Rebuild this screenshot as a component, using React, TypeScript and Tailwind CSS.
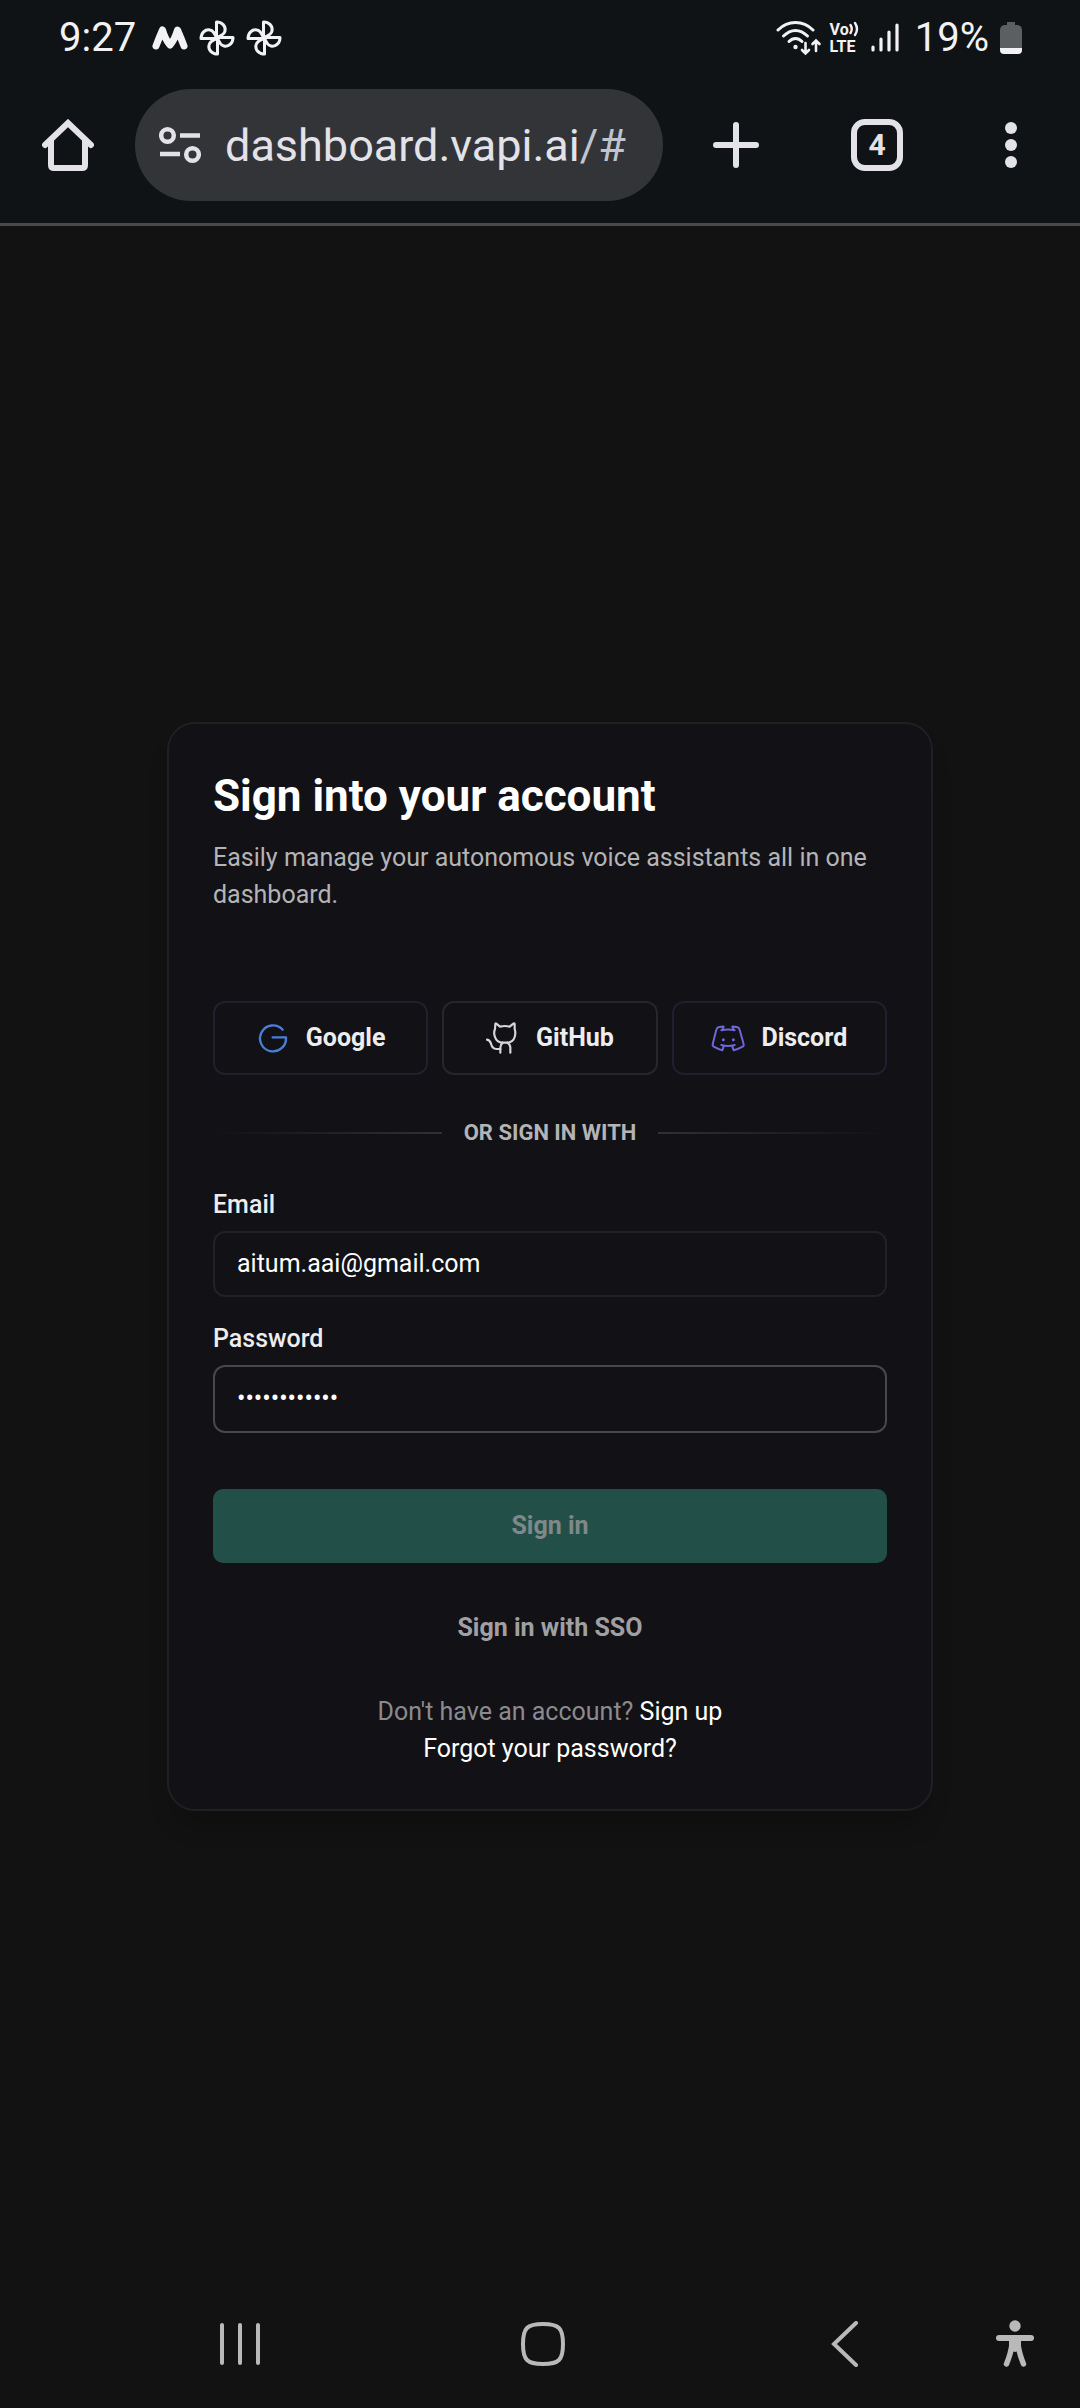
import React from "react";

/**
 * Sign in page shown inside a mobile browser,
 * with the phone's status bar on top and the nav bar at the bottom
 */

type IconProps = { className?: string };

const MonoIcon = ({ className }: IconProps) => (
  <svg viewBox="0 0 36 26" className={className} fill="none" stroke="currentColor" strokeWidth="7" strokeLinecap="round" strokeLinejoin="round">
    <path d="M4 21 Q7 13 10.500 5 Q13 14 18 20 Q23 14 25.500 5 Q29 13 32 21" />
  </svg>
);

const PinwheelIcon = ({ className }: IconProps) => (
  <svg viewBox="0 0 36 36" className={className} fill="none" stroke="currentColor" strokeWidth="3" strokeLinejoin="round">
    {[0, 90, 180, 270].map((angle) => (
      <path key={angle} transform={`rotate(${angle} 18 18)`} d="M17.500 18 V2 C23 2 27 6 26 11 C25.500 14 22 16 18 17.500" />
    ))}
  </svg>
);

const WifiIcon = ({ className }: IconProps) => (
  <svg viewBox="0 0 46 36" className={className} fill="none" stroke="currentColor" strokeWidth="3" strokeLinecap="round">
    <path d="M2 10 C12 0 27 0 37 10" />
    <path d="M7.500 16 C15 8.500 24 8.500 31.500 16" />
    <path d="M13 21.500 C17 17.500 22 17.500 26 21.500" />
    <circle cx="19.500" cy="27" r="2.200" fill="currentColor" stroke="none" />
    <path d="M29.500 23 V33 M26 30 L29.500 33.500 L33 30 M40 31 V21 M36.500 24 L40 20.500 L43.500 24" strokeWidth="2.600" />
  </svg>
);

const VoiceWaves = ({ className }: IconProps) => (
  <svg viewBox="0 0 10 16" className={className} fill="none" stroke="currentColor" strokeWidth="2.4" strokeLinecap="round">
    <path d="M1.500 4 Q4 8 1.500 12 M6 2 Q10 8 6 14" />
  </svg>
);

const SignalIcon = ({ className }: IconProps) => (
  <svg viewBox="0 0 28 32" className={className} stroke="currentColor" strokeWidth="3.200" strokeLinecap="round">
    <path d="M2 25 V28 M10 17 V28 M18 10 V28 M26 3 V28" />
  </svg>
);

const BatteryIcon = ({ className }: IconProps) => (
  <svg viewBox="0 0 22 32" className={className}>
    <path d="M7 0 H15 V3 H18 Q22 4 22 8 V26 H0 V8 Q0 4 4 3 H7 Z" fill="#5c5f62" />
    <path d="M0 26 H22 V28 Q22 32 18 32 H4 Q0 32 0 28 Z" fill="#f2f2f4" />
  </svg>
);

const HomeIcon = ({ className }: IconProps) => (
  <svg viewBox="0 0 52 52" className={className} fill="none" stroke="currentColor" strokeWidth="6" strokeLinecap="round" strokeLinejoin="round">
    <path d="M3 26 L26 4 L49 26" strokeLinejoin="miter" />
    <path d="M9 22 V46 Q9 49 12 49 H40 Q43 49 43 46 V22" />
  </svg>
);

const TuneIcon = ({ className }: IconProps) => (
  <svg viewBox="0 0 42 38" className={className} fill="none" stroke="currentColor" strokeWidth="4.500">
    <circle cx="8.500" cy="9.500" r="6.300" />
    <path d="M21 9.500 H41 M1 28 H21" />
    <circle cx="33.500" cy="28.500" r="6.300" />
  </svg>
);

const PlusIcon = ({ className }: IconProps) => (
  <svg viewBox="0 0 46 46" className={className} stroke="currentColor" strokeWidth="6" strokeLinecap="round">
    <path d="M23 3 V43 M3 23 H43" />
  </svg>
);

const DotsIcon = ({ className }: IconProps) => (
  <svg viewBox="0 0 12 46" className={className} fill="currentColor">
    <circle cx="6" cy="6" r="6" />
    <circle cx="6" cy="23" r="6" />
    <circle cx="6" cy="40" r="6" />
  </svg>
);

const GoogleIcon = ({ className }: IconProps) => (
  <svg viewBox="0 0 102 102" className={className} fill="none" stroke="#4a7fd8" strokeWidth="7" strokeLinecap="round" strokeLinejoin="round">
    <path d="M80 26 A39 39 0 1 0 90 49 H50" />
  </svg>
);

const GitHubIcon = ({ className }: IconProps) => (
  <svg viewBox="0 0 102 102" className={className} fill="none" stroke="#d6d6d8" strokeWidth="6.500" strokeLinecap="round" strokeLinejoin="round">
    <path d="M28 9 Q28 6 31 8 L42 17 Q57 13 71 17 L82 8 Q85 6 86 9 V24 Q90 36 86 48 Q81 64 64 65 H50 Q32 64 27 48 Q22 36 27 24 Z" />
    <path d="M50 65 Q43 71 43 80 V95 M64 65 Q73 71 73 80 V95" />
    <path d="M3 56 Q12 58 15 68 Q19 83 31 84 H43" />
  </svg>
);

const DiscordIcon = ({ className }: IconProps) => (
  <svg viewBox="0 0 102 102" className={className} fill="none" stroke="#6f66dc" strokeWidth="6" strokeLinecap="round" strokeLinejoin="round">
    <path d="M31 28 Q51 23 71 28 M31 72 Q51 78 71 72" />
    <path d="M34 26 L38 17 Q36 16 22 19 Q18 20 15 30 L5 70 Q4 75 8 77 Q21 84 34 88 L38 76" />
    <path d="M68 26 L64 17 Q66 16 80 19 Q84 20 87 30 L98 70 Q99 75 95 77 Q82 84 68 88 L64 76" />
    <circle cx="37" cy="56" r="4.500" fill="#6f66dc" stroke="none" />
    <circle cx="67" cy="56" r="4.500" fill="#6f66dc" stroke="none" />
  </svg>
);

const PersonIcon = ({ className }: IconProps) => (
  <svg viewBox="0 0 40 48" className={className} fill="none" stroke="currentColor" strokeWidth="6" strokeLinecap="round" strokeLinejoin="round">
    <circle cx="20" cy="6" r="5.700" fill="currentColor" stroke="none" />
    <path d="M4 18 H36" />
    <path d="M14 18 H26 V30 L20 32 L14 30 Z" fill="currentColor" stroke="none" />
    <path d="M17 24 Q16 33 11.500 44 M23 24 Q24 33 28.500 44" strokeWidth="5.500" />
  </svg>
);

const providers = [
  { name: "Google", Icon: GoogleIcon, border: "border-[#1f212c]" },
  { name: "GitHub", Icon: GitHubIcon, border: "border-[#26262b]" },
  { name: "Discord", Icon: DiscordIcon, border: "border-[#201f30]" },
];

const StatusBar = () => (
  <div className="flex h-[75px] items-center justify-between pr-[58px] pl-[59px] text-[#f2f2f4]">
    <div className="flex items-center">
      <span className="text-[40px] leading-none">9:27</span>
      <MonoIcon className="ml-4 h-[26px] w-9" />
      <PinwheelIcon className="ml-[11px] size-9" />
      <PinwheelIcon className="ml-[11px] size-9" />
    </div>
    <div className="flex items-center">
      <WifiIcon className="h-9 w-[46px]" />
      <div className="ml-2 flex flex-col text-[16px] leading-[17px] font-bold">
        <span className="flex items-center">
          Vo
          <VoiceWaves className="h-4 w-[10px]" />
        </span>
        <span>LTE</span>
      </div>
      <SignalIcon className="ml-3 h-8 w-7" />
      <span className="ml-4 text-[40px] leading-none">19%</span>
      <BatteryIcon className="ml-[11px] h-8 w-[22px]" />
    </div>
  </div>
);

const Toolbar = () => (
  <div className="flex h-[148px] items-center pr-[63px] pb-2 pl-[42px] text-[#e3e2e8]">
    <button type="button" aria-label="Home">
      <HomeIcon className="size-[52px]" />
    </button>
    <div className="ml-[41px] flex h-28 min-w-0 flex-1 items-center rounded-full bg-[#323438] px-6">
      <button type="button" aria-label="Site settings">
        <TuneIcon className="h-[38px] w-[42px]" />
      </button>
      <span className="ml-6 text-[45px] leading-none whitespace-nowrap">
        dashboard.vapi.ai<span className="text-[#c0c4cf]">/#</span>
      </span>
    </div>
    <button type="button" aria-label="New tab" className="ml-[50px]">
      <PlusIcon className="size-[46px]" />
    </button>
    <button
      type="button"
      aria-label="Tabs"
      className="ml-[92px] flex size-[52px] items-center justify-center rounded-[14px] border-[6px] border-current text-[30px] leading-none font-bold"
    >
      4
    </button>
    <button type="button" aria-label="Menu" className="ml-[102px]">
      <DotsIcon className="h-[46px] w-3" />
    </button>
  </div>
);

const SignInCard = () => (
  <form
    onSubmit={(e) => e.preventDefault()}
    className="w-full max-w-[766px] rounded-[28px] border-2 border-[#202023] bg-[#121115] px-11 pt-[46px] pb-[42px] text-[25px] leading-[36px] shadow-[0_20px_24px_-6px_rgba(0,0,0,0.2)]"
  >
    <h1 className="text-[44px] leading-[52px] font-bold text-white">Sign into your account</h1>
    <p className="mt-[17px] leading-[37px] text-[#b4b4b6]">
      Easily manage your autonomous voice assistants all in one dashboard.
    </p>

    <div className="mt-[88px] grid grid-cols-3 gap-[14px]">
      {providers.map(({ name, Icon, border }) => (
        <button
          key={name}
          type="button"
          className={`flex h-[74px] items-center justify-center gap-4 rounded-[12px] border-2 font-bold text-[#ededef] ${border}`}
        >
          <Icon className="size-[34px]" />
          {name}
        </button>
      ))}
    </div>

    <div className="mt-10 flex items-center gap-[22px] text-[22px] font-bold text-[#b4b4b6]">
      <div className="h-[2px] flex-1 bg-gradient-to-l from-[#303035] to-transparent" />
      OR SIGN IN WITH
      <div className="h-[2px] flex-1 bg-gradient-to-r from-[#303035] to-transparent" />
    </div>

    <label htmlFor="email" className="mt-9 block font-medium text-[#ededef]">
      Email
    </label>
    <input
      id="email"
      type="email"
      defaultValue="aitum.aai@gmail.com"
      className="mt-2 block h-[66px] w-full rounded-[12px] border-2 border-[#222226] bg-transparent px-[22px] text-white outline-none"
    />
    <label htmlFor="password" className="mt-6 block font-medium text-[#ededef]">
      Password
    </label>
    <input
      id="password"
      type="password"
      defaultValue="abcdefghijkl"
      className="mt-2 block h-[68px] w-full rounded-[12px] border-2 border-[#48484c] bg-transparent px-[22px] text-white outline-none"
    />

    <button type="submit" className="mt-14 block h-[74px] w-full rounded-[10px] bg-[#225048] font-bold text-[#808889]">
      Sign in
    </button>
    <button type="button" className="mt-7 block h-[74px] w-full font-bold text-[#a0a0a3]">
      Sign in with SSO
    </button>

    <div className="mt-7 text-center leading-[37px] text-white">
      <p>
        <span className="text-[#8b8b8d]">Don't have an account?</span> <a href="#signup">Sign up</a>
      </p>
      <a href="#forgot">Forgot your password?</a>
    </div>
  </form>
);

const NavBar = () => (
  <nav className="flex h-32 items-center gap-32 pr-[45px] pl-[218px] text-[#b9b9b9]">
    <div className="flex flex-1 items-center justify-between">
      <button type="button" aria-label="Recent apps">
        <svg viewBox="0 0 44 44" className="size-11" stroke="currentColor" strokeWidth="4" strokeLinecap="round">
          <path d="M4 3 V41 M22 3 V41 M40 3 V41" />
        </svg>
      </button>
      <button type="button" aria-label="Home screen">
        <svg viewBox="0 0 44 44" className="size-11" fill="none" stroke="currentColor" strokeWidth="4">
          <path d="M22 2 C38 2 42 6 42 22 C42 38 38 42 22 42 C6 42 2 38 2 22 C2 6 6 2 22 2 Z" />
        </svg>
      </button>
      <button type="button" aria-label="Back" className="flex w-11 justify-center">
        <svg viewBox="0 0 28 46" className="h-[46px] w-7" fill="none" stroke="currentColor" strokeWidth="4" strokeLinecap="round">
          <path d="M25 2 L3 23 L25 44" />
        </svg>
      </button>
    </div>
    <button type="button" aria-label="Accessibility">
      <PersonIcon className="h-12 w-10" />
    </button>
  </nav>
);

const App: React.FC = () => {
  return (
    <div className="flex min-h-screen flex-col bg-[#121212] font-['Roboto',sans-serif]">
      <header className="border-b-[3px] border-[#4a4a4c] bg-[#101316]">
        <StatusBar />
        <Toolbar />
      </header>
      <main className="flex flex-1 items-center justify-center pt-[26px] pl-5">
        <SignInCard />
      </main>
      <NavBar />
    </div>
  );
};

export default App;
